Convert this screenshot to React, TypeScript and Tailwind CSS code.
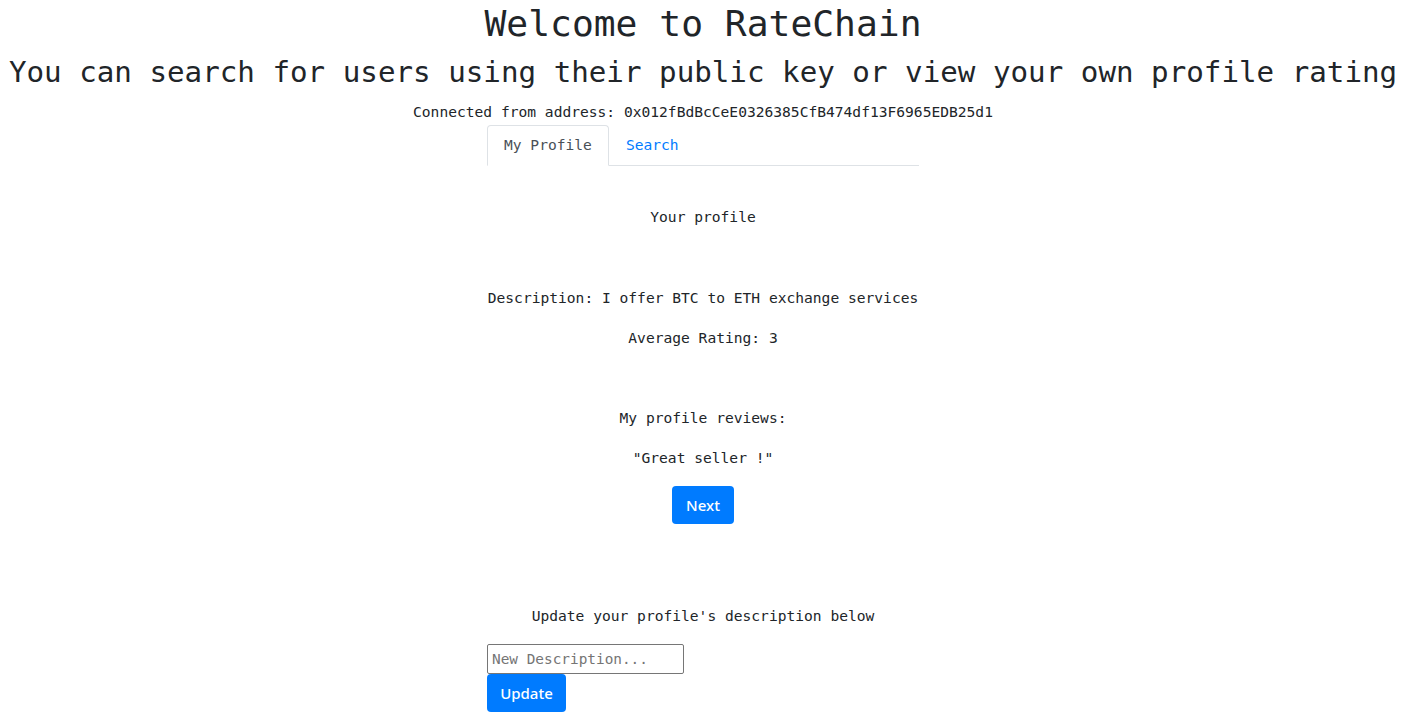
import React, { useState } from 'react';

const mono = "font-['DejaVu_Sans_Mono','Liberation_Mono',monospace]";
const sans = "font-['Noto_Sans','Open_Sans','Liberation_Sans',sans-serif]";

export default function App() {
  const [tab, setTab] = useState<'profile' | 'search'>('profile');
  const [desc, setDesc] = useState('');

  return (
    <div className={`${mono} w-[1406px] text-center text-[#212529] bg-white min-h-[724px]`}>
      <h1 className="text-[36.3px] leading-[48px] h-[48px]">Welcome to RateChain</h1>
      <h2 className="text-[29.2px] leading-[38px] mt-[5px] whitespace-nowrap">
        You can search for users using their public key or view your own profile rating
      </h2>
      <p className="text-[14.6px] leading-[24px] mt-[9px]">
        Connected from address: 0x012fBdBcCeE0326385CfB474df13F6965EDB25d1
      </p>

      <div className="w-[432px] mx-auto mt-[1px] text-[14.6px] leading-[24px]">
        {/* tabs */}
        <div className="flex border-b border-[#dee2e6]">
          <button
            onClick={() => setTab('profile')}
            className={`h-[41px] px-4 pb-[2px] -mb-px rounded-t border ${
              tab === 'profile'
                ? 'border-[#dee2e6] border-b-white text-[#495057] bg-white'
                : 'border-transparent text-[#007bff]'
            }`}
          >
            My Profile
          </button>
          <button
            onClick={() => setTab('search')}
            className={`h-[41px] px-4 pb-[2px] -mb-px rounded-t border ${
              tab === 'search'
                ? 'border-[#dee2e6] border-b-white text-[#495057] bg-white'
                : 'border-transparent text-[#007bff]'
            }`}
          >
            Search
          </button>
        </div>

        <p className="mt-[39px]">Your profile</p>
        <p className="mt-[57px] whitespace-nowrap">Description: I offer BTC to ETH exchange services</p>
        <p className="mt-[16px]">Average Rating: 3</p>
        <p className="mt-[56px]">My profile reviews:</p>
        <p className="mt-[16px]">"Great seller !"</p>
        <button
          className={`${sans} mt-[16px] w-[62px] h-[38px] rounded bg-[#007bff] text-white text-[15px] font-medium`}
        >
          Next
        </button>

        <p className="mt-[80px]">Update your profile's description below</p>
        <div className="text-left mt-[16px]">
          <input
            value={desc}
            onChange={(e) => setDesc(e.target.value)}
            placeholder="New Description..."
            className={`${mono} block w-[197px] h-[30px] px-[4px] border border-[#767676] rounded-[2px] text-[14.4px] placeholder:text-[#757575] outline-none`}
          />
          <button
            className={`${sans} block w-[79px] h-[38px] rounded bg-[#007bff] text-white text-[15px] font-medium`}
          >
            Update
          </button>
        </div>
      </div>
    </div>
  );
}
